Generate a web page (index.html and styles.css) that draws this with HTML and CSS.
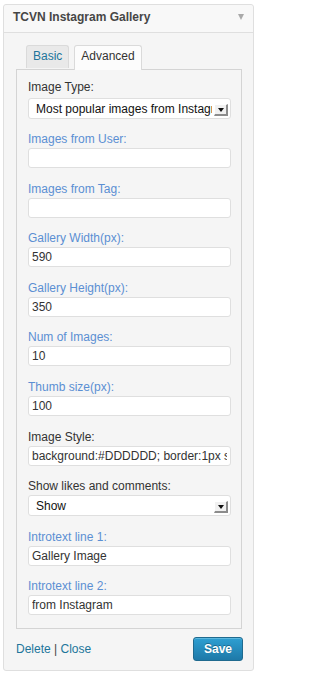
FILE: index.html
```html
<!DOCTYPE html>
<html lang="en">
<head>
<meta charset="utf-8">
<title>TCVN Instagram Gallery</title>
<link rel="stylesheet" href="styles.css">
</head>
<body>
<div class="widget">
  <div class="widget-top">
    <h3 class="widget-title">TCVN Instagram Gallery</h3>
    <span class="toggle"></span>
  </div>
  <div class="widget-inside">
    <ul class="tabs">
      <li class="tab">Basic</li>
      <li class="tab active">Advanced</li>
    </ul>
    <div class="panel">
      <div class="field first">
        <label class="lbl dark">Image Type:</label>
        <div class="select-wrap">
          <select class="sel"><option>Most popular images from Instagram</option></select>
          <span class="sel-arrow"></span>
        </div>
      </div>
      <div class="field">
        <label class="lbl">Images from User:</label>
        <input class="txt" type="text" value="">
      </div>
      <div class="field">
        <label class="lbl">Images from Tag:</label>
        <input class="txt" type="text" value="">
      </div>
      <div class="field">
        <label class="lbl">Gallery Width(px):</label>
        <input class="txt" type="text" value="590">
      </div>
      <div class="field">
        <label class="lbl">Gallery Height(px):</label>
        <input class="txt" type="text" value="350">
      </div>
      <div class="field">
        <label class="lbl">Num of Images:</label>
        <input class="txt" type="text" value="10">
      </div>
      <div class="field">
        <label class="lbl">Thumb size(px):</label>
        <input class="txt" type="text" value="100">
      </div>
      <div class="field">
        <label class="lbl dark">Image Style:</label>
        <input class="txt" type="text" value="background:#DDDDDD; border:1px solid #CCCCCC;">
      </div>
      <div class="field">
        <label class="lbl dark">Show likes and comments:</label>
        <div class="select-wrap">
          <select class="sel"><option>Show</option></select>
          <span class="sel-arrow"></span>
        </div>
      </div>
      <div class="field">
        <label class="lbl">Introtext line 1:</label>
        <input class="txt" type="text" value="Gallery Image">
      </div>
      <div class="field last">
        <label class="lbl">Introtext line 2:</label>
        <input class="txt" type="text" value="from Instagram">
      </div>
    </div>
    <div class="actions">
      <div class="links"><a class="lnk" href="#">Delete</a> <span class="sep">|</span> <a class="lnk" href="#">Close</a></div>
      <button class="save" type="button">Save</button>
    </div>
  </div>
</div>
</body>
</html>
```

FILE: styles.css
```css
html, body {
  margin: 0;
  padding: 0;
  background: #ffffff;
}
body {
  font-family: "Liberation Sans", Arial, sans-serif;
  font-size: 12px;
  color: #333;
}
.widget {
  margin: 4px 4px 0 3px;
  width: 251px;
  box-sizing: border-box;
  border: 1px solid #dfdfdf;
  border-radius: 3px;
  background: #f5f5f5;
}
.widget-top {
  height: 28px;
  box-sizing: border-box;
  padding: 4px 9px 0 9px;
  display: flex;
  align-items: flex-start;
  border-bottom: 1px solid #dfdfdf;
  background: #f8f8f8;
  border-radius: 3px 3px 0 0;
}
.widget-title {
  margin: 0;
  font-size: 12px;
  line-height: 16px;
  font-weight: bold;
  color: #464646;
}
.toggle {
  margin-left: auto;
  margin-top: 5px;
  width: 0;
  height: 0;
  border-left: 3px solid transparent;
  border-right: 3px solid transparent;
  border-top: 6px solid #a9a9a9;
}
.widget-inside {
  padding: 12px 11px 9px 12px;
}
.tabs {
  list-style: none;
  margin: 0;
  padding: 0 0 0 10px;
  display: flex;
  align-items: flex-start;
  gap: 5px;
  height: 24px;
}
.tab {
  height: 23px;
  box-sizing: border-box;
  padding: 2px 6px 0 6px;
  line-height: 16px;
  border: 1px solid #dadada;
  border-bottom: none;
  border-radius: 3px 3px 0 0;
  background: #e9e9e9;
  color: #21759b;
}
.tab.active {
  height: 25px;
  background: #fcfcfc;
  color: #333;
  position: relative;
  z-index: 1;
}
.panel {
  border: 1px solid #d4d4d4;
  background: #f5f5f5;
  padding: 9px 10px 13px 11px;
}
.field {
  margin-bottom: 12.6px;
}
.field.first {
  margin-bottom: 12px;
}
.field.last {
  margin-bottom: 0;
}
.lbl {
  display: block;
  line-height: 16px;
  margin-bottom: 1px;
  color: #5b8fd3;
}
.lbl.dark {
  color: #333;
}
.first .lbl {
  margin-bottom: 3px;
}
.txt {
  display: block;
  width: 100%;
  height: 20px;
  box-sizing: border-box;
  margin: 0;
  padding: 0 3px;
  border: 1px solid #dfdfdf;
  border-radius: 3px;
  background: #fff;
  font-family: "Liberation Sans", Arial, sans-serif;
  font-size: 12px;
  color: #333;
  outline: none;
}
.select-wrap {
  position: relative;
  height: 21px;
}
.sel {
  -webkit-appearance: none;
  appearance: none;
  display: block;
  width: 100%;
  height: 21px;
  box-sizing: border-box;
  margin: 0;
  padding: 0 18px 0 7px;
  border: 1px solid #dfdfdf;
  border-radius: 3px;
  background: #fff;
  font-family: "Liberation Sans", Arial, sans-serif;
  font-size: 12px;
  color: #111;
  outline: none;
}
.sel-arrow {
  position: absolute;
  right: 3px;
  top: 6px;
  width: 14px;
  height: 12px;
  box-sizing: border-box;
  background: #f1f1f1;
  border-top: 1px solid #ffffff;
  border-left: 1px solid #ffffff;
  border-right: 2px solid #8c8c8c;
  border-bottom: 2px solid #8c8c8c;
  display: flex;
  align-items: center;
  justify-content: center;
}
.sel-arrow::after {
  content: "";
  width: 0;
  height: 0;
  border-left: 3px solid transparent;
  border-right: 3px solid transparent;
  border-top: 4px solid #111;
}
.actions {
  display: flex;
  align-items: center;
  justify-content: space-between;
  margin-top: 8px;
}
.links {
  line-height: 16px;
  font-size: 12px;
}
.lnk {
  color: #21759b;
  text-decoration: none;
}
.sep {
  color: #444;
}
.save {
  height: 24px;
  box-sizing: border-box;
  margin: 0 -1px 0 0;
  padding: 0 10px;
  border: 1px solid #1f6a8f;
  border-radius: 3px;
  background: linear-gradient(to bottom, #2e9fd2, #1e79a8);
  box-shadow: inset 0 1px 0 rgba(120, 200, 230, 0.6);
  color: #fff;
  font-family: "Liberation Sans", Arial, sans-serif;
  font-size: 12px;
  font-weight: bold;
  text-shadow: 0 -1px 0 rgba(0, 0, 0, 0.3);
}
```
